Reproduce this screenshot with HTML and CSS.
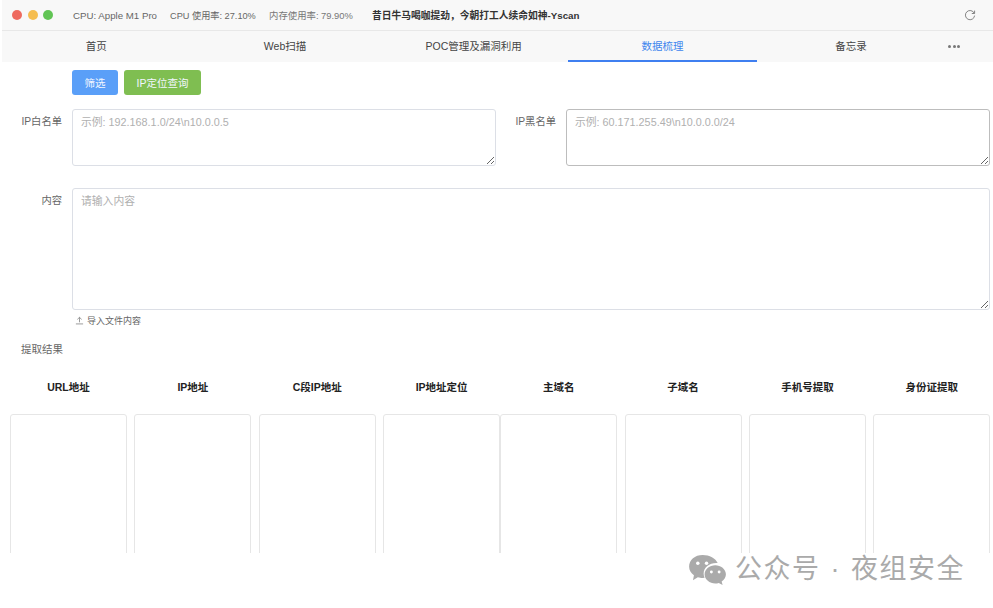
FILE: index.html
```html
<!DOCTYPE html>
<html lang="zh-CN">
<head>
<meta charset="utf-8">
<title>Yscan</title>
<link rel="stylesheet" href="styles.css">
</head>
<body>
<div class="app">
  <header class="titlebar">
    <div class="lights"><i class="light red"></i><i class="light yellow"></i><i class="light green"></i></div>
    <span class="stat cpu">CPU: Apple M1 Pro</span>
    <span class="stat usage">CPU 使用率: 27.10%</span>
    <span class="stat mem">内存使用率: 79.90%</span>
    <span class="motto">昔日牛马喝咖提劲，今朝打工人续命如神-Yscan</span>
    <svg class="reload" viewBox="0 0 12 12" width="12" height="12"><path d="M10.2 4.2A4.6 4.6 0 1 0 10.6 6.6" fill="none" stroke="#777" stroke-width="0.9"/><path d="M10.6 1.6V4.5H7.8" fill="none" stroke="#777" stroke-width="0.9"/></svg>
  </header>
  <nav class="tabs">
    <a class="tab">首页</a>
    <a class="tab">Web扫描</a>
    <a class="tab">POC管理及漏洞利用</a>
    <a class="tab active">数据梳理</a>
    <a class="tab">备忘录</a>
    <a class="more"><i></i><i></i><i></i></a>
  </nav>
  <main class="content">
    <div class="actions">
      <button class="btn blue">筛选</button>
      <button class="btn lime">IP定位查询</button>
    </div>
    <div class="lists">
      <div class="field half">
        <label class="label">IP白名单</label>
        <textarea class="input short" placeholder="示例: 192.168.1.0/24\n10.0.0.5"></textarea>
      </div>
      <div class="field half second">
        <label class="label">IP黑名单</label>
        <textarea class="input short dark" placeholder="示例: 60.171.255.49\n10.0.0.0/24"></textarea>
      </div>
    </div>
    <div class="field body">
      <label class="label">内容</label>
      <textarea class="input tall" placeholder="请输入内容"></textarea>
    </div>
    <div class="import">
      <svg viewBox="0 0 10 10" width="9" height="9"><path d="M5 7V1.500M2.600 3.800 5 1.500l2.400 2.300M1 8.800h8" fill="none" stroke="#777" stroke-width="0.8"/></svg>
      <span>导入文件内容</span>
    </div>
    <div class="result-label">提取结果</div>
    <div class="cols">
      <section class="col"><h3>URL地址</h3><div class="box"></div></section>
      <section class="col"><h3>IP地址</h3><div class="box"></div></section>
      <section class="col"><h3>C段IP地址</h3><div class="box"></div></section>
      <section class="col"><h3>IP地址定位</h3><div class="box"></div></section>
      <section class="col"><h3>主域名</h3><div class="box"></div></section>
      <section class="col"><h3>子域名</h3><div class="box"></div></section>
      <section class="col"><h3>手机号提取</h3><div class="box"></div></section>
      <section class="col"><h3>身份证提取</h3><div class="box"></div></section>
    </div>
  </main>
</div>
<div class="watermark">
  <svg viewBox="0 0 40 32" width="39" height="31"><path d="M15 1C7 1 1 6 1 13c0 4 2 7 5 9l-1 5 5-3c2 .6 3 .8 5 .8l2-.2c-.6-1.400-1-2.800-1-4.300 0-6.500 6-11 13-11l1.500.1C28.500 4.500 22 1 15 1z" fill="#aaa"/><path d="M39 21c0-5.500-5.300-9.500-11-9.500S17 15.500 17 21s5.300 9.500 11 9.500c1.300 0 2.500-.2 3.600-.6l4 2.100-1-3.700C37.500 26.500 39 24 39 21z" fill="#aaa"/><circle cx="10" cy="9.500" r="1.800" fill="#fff"/><circle cx="19" cy="9.500" r="1.800" fill="#fff"/><circle cx="24" cy="18.500" r="1.500" fill="#fff"/><circle cx="32" cy="18.500" r="1.500" fill="#fff"/></svg>
  <span>公众号 · 夜组安全</span>
</div>
</body>
</html>
```
FILE: styles.css
```css
* { box-sizing: border-box; }
html, body { margin: 0; padding: 0; background: #fff; }
body {
  width: 993px;
  height: 608px;
  overflow: hidden;
  position: relative;
  font-family: "Liberation Sans", "Noto Sans CJK SC", sans-serif;
  color: #444;
}
.app { height: 553px; overflow: hidden; }
.titlebar {
  height: 31px;
  display: flex;
  align-items: center;
  padding-left: 10px;
  margin-left: 2px;
  background: #f8f8f8;
  border-bottom: 1px solid #e8e8e8;
}
.lights { display: flex; gap: 5.500px; margin-right: 20px; }
.light { width: 10px; height: 10px; border-radius: 50%; display: block; }
.red { background: #ee6a5f; }
.yellow { background: #f5bd4f; }
.green { background: #61c454; }
.stat { font-size: 9.500px; color: #666; white-space: nowrap; }
.cpu { width: 97px; font-size: 9.700px; }
.usage { width: 99px; font-size: 9.200px; }
.mem { width: 103px; font-size: 9.400px; color: #777; }
.motto { font-size: 9.750px; font-weight: 700; color: #333; white-space: nowrap; }
.reload { margin-left: auto; margin-right: 17px; }
.tabs {
  height: 31px;
  margin-left: 2px;
  display: flex;
  background: #f8f8f8;
}
.tab {
  width: 188.700px;
  display: flex;
  align-items: center;
  justify-content: center;
  font-size: 10.500px;
  color: #444;
  white-space: nowrap;
  padding-bottom: 3px;
}
.tab.active { color: #3f86ee; border-bottom: 2px solid #3f7ff0; padding-bottom: 1px; }
.more { flex: 1; display: flex; align-items: center; gap: 1.500px; padding-left: 3px; padding-bottom: 1px; }
.more i { width: 3px; height: 3px; border-radius: 50%; background: #777; display: block; }
.content { padding: 8px 3px 0 10px; }
.actions { display: flex; gap: 6px; margin-left: 62px; }
.btn {
  height: 25px;
  border: 0;
  border-radius: 3px;
  color: #f2f6ff;
  font: inherit;
  font-size: 10.500px;
  padding: 0;
}
.blue { width: 46px; background: #5a9ff8; }
.lime { width: 77px; background: #7fbe51; }
.lists { display: flex; margin-top: 14px; }
.field { display: flex; }
.half { width: 486px; }
.second { width: 494px; padding-left: 4px; }
.second .label { width: 56px; }
.label {
  width: 52px;
  text-align: right;
  font-size: 10.300px;
  color: #666;
  padding-top: 4px;
  margin-right: 10px;
  flex: none;
}
.input {
  flex: 1;
  display: block;
  border: 1px solid #dcdfe6;
  border-radius: 3px;
  padding: 3px 8px;
  font: inherit;
  font-size: 10.800px;
  background: #fff;
  outline: none;
}
.input::placeholder { color: #b0b0b0; opacity: 1; }
.short { height: 57px; }
.dark { border-color: #bdbdbd; }
.body { margin-top: 22px; }
.tall { height: 122px; }
.import {
  display: flex;
  align-items: center;
  gap: 3px;
  margin: 3px 0 0 65px;
  font-size: 9px;
  color: #666;
  height: 14px;
}
.result-label { font-size: 10.500px; color: #666; margin: 15px 0 0 11px; height: 14px; line-height: 14px; }
.cols { display: flex; gap: 7.400px; margin-top: 23px; }
.col { width: 117px; flex: none; }
.col:nth-child(5) { margin-left: -7.400px; }
.col h3 {
  margin: 0 0 18px;
  height: 17px;
  line-height: 17px;
  text-align: center;
  font-size: 10.500px;
  font-weight: 700;
  color: #222;
}
.box { height: 200px; border: 1px solid #e6e6e6; border-radius: 3px; background: #fff; }
.watermark {
  position: absolute;
  left: 688px;
  top: 553px;
  display: flex;
  align-items: center;
  gap: 8px;
  color: #aaa;
  font-size: 27px;
  letter-spacing: 1.500px;
  word-spacing: 1px;
  white-space: nowrap;
  line-height: 32px;
}
```
